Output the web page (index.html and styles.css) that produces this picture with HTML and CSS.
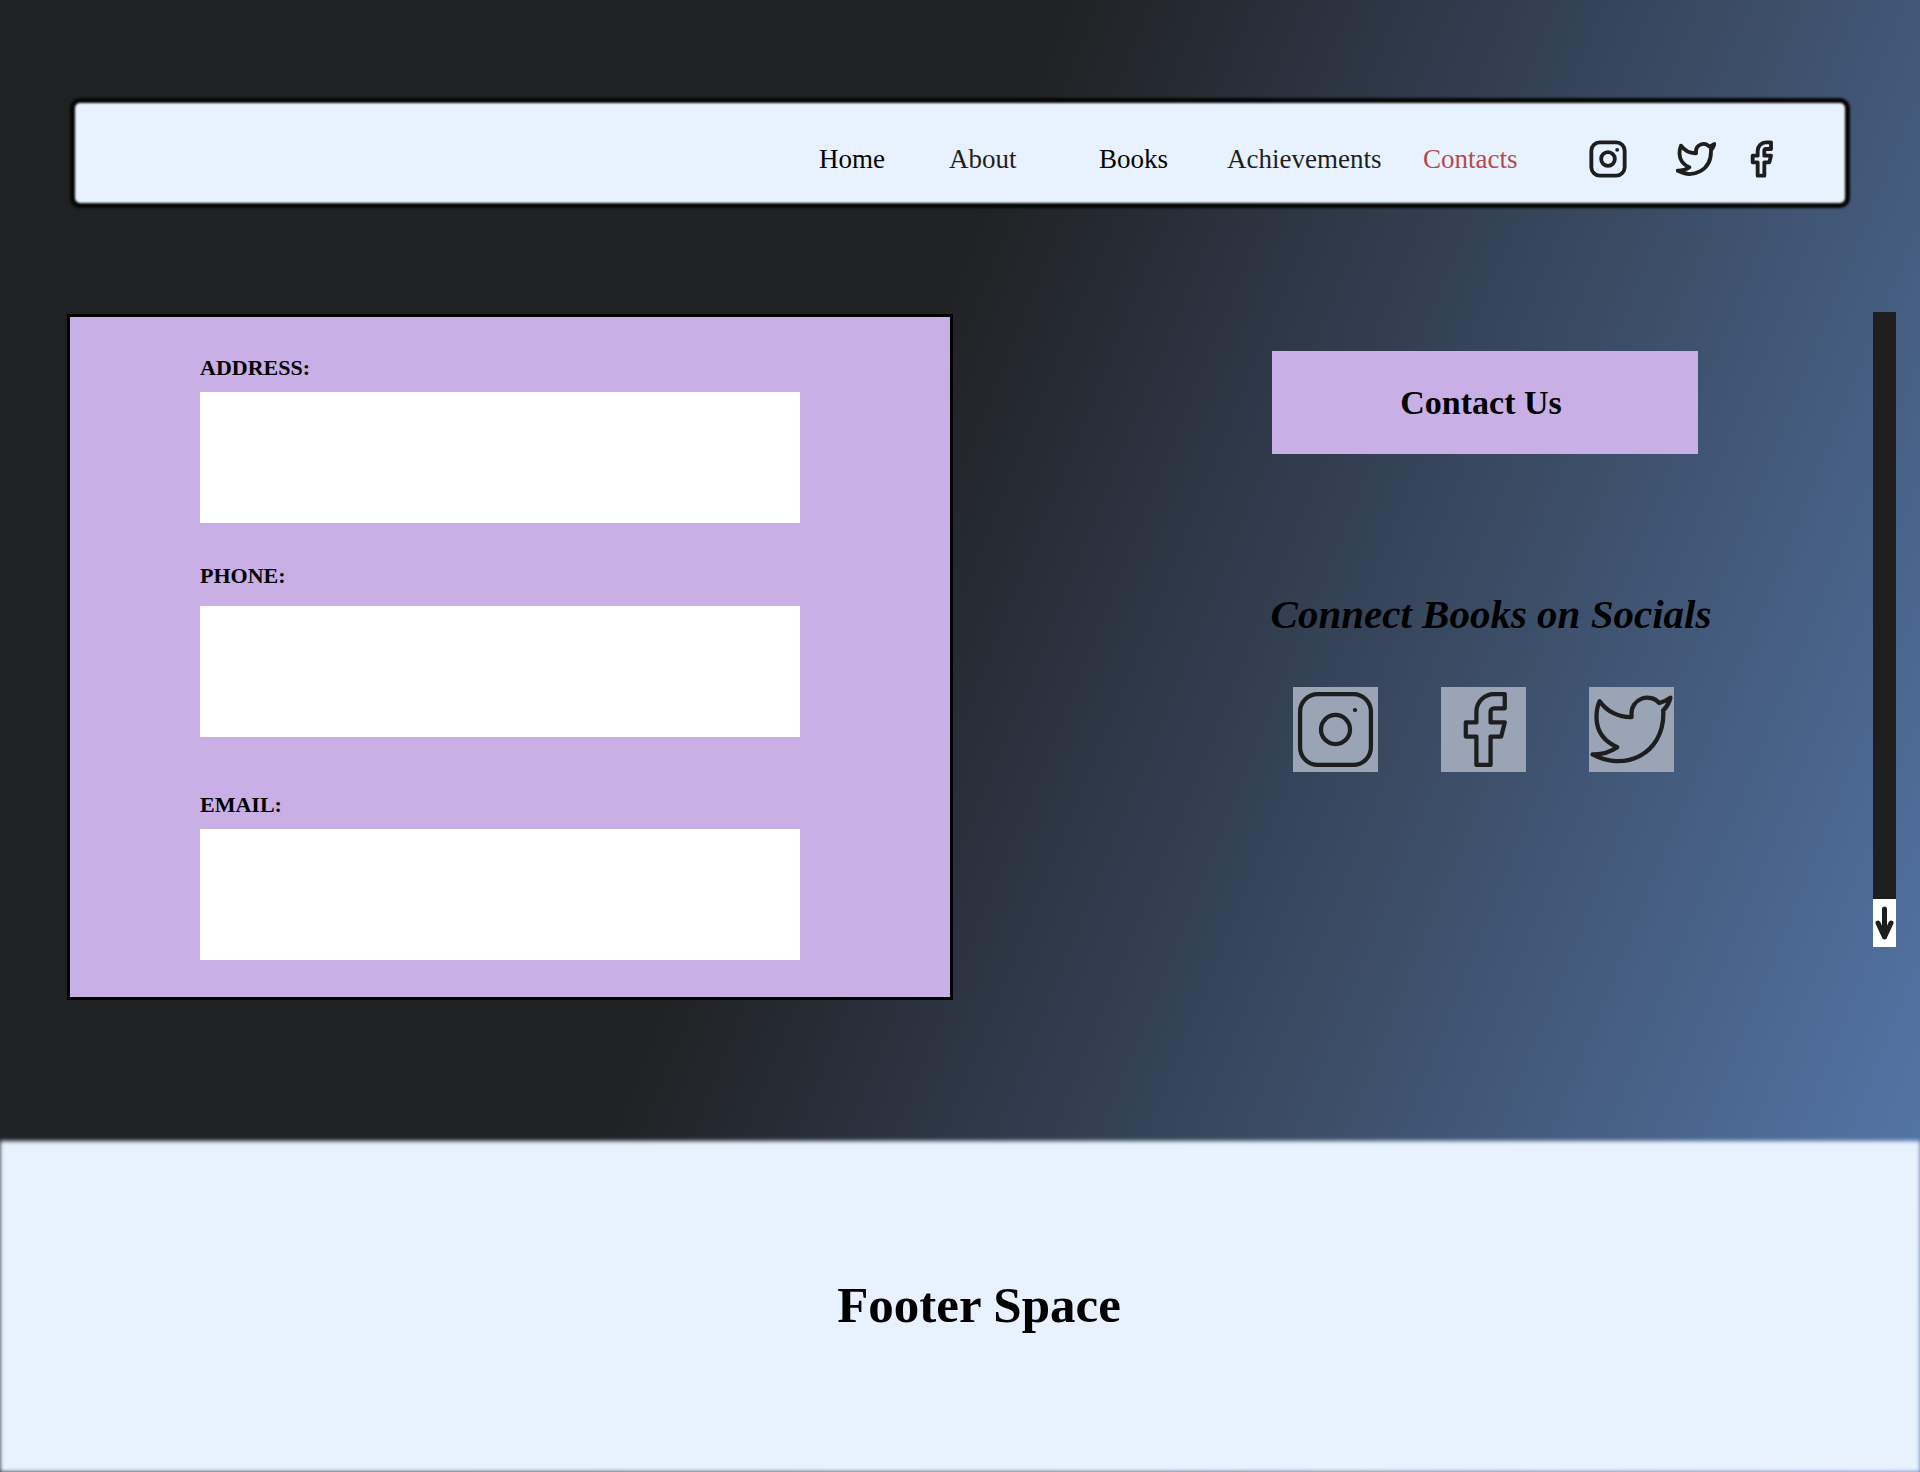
FILE: index.html
```html
<!DOCTYPE html>
<html lang="en">
<head>
<meta charset="utf-8">
<meta name="viewport" content="width=device-width, initial-scale=1">
<title>Contacts</title>
<link rel="stylesheet" href="styles.css">
</head>
<body>
<svg class="sprite" aria-hidden="true">
  <symbol id="instagram" viewBox="0 0 24 24">
    <rect x="2" y="2" width="20" height="20" rx="5"/>
    <circle cx="12" cy="12" r="4.1"/>
    <path d="M17.5 6.5h.01"/>
  </symbol>
  <symbol id="facebook" viewBox="0 0 24 24">
    <path d="M18 2h-3a5 5 0 0 0-5 5v3H7v4h3v8h4v-8h3l1-4h-4V7a1 1 0 0 1 1-1h3z"/>
  </symbol>
  <symbol id="twitter" viewBox="0 0 24 24">
    <path d="M23 3a10.9 10.9 0 0 1-3.14 1.53 4.48 4.48 0 0 0-7.86 3v1A10.66 10.66 0 0 1 3 4s-4 9 5 13a11.64 11.64 0 0 1-7 2c9 5 20 0 20-11.5a4.5 4.5 0 0 0-.08-.83A7.72 7.72 0 0 0 23 3z"/>
  </symbol>
</svg>

<header class="header">
  <nav class="nav" aria-label="Main">
    <a class="nav-link strong" href="#home">Home</a>
    <a class="nav-link" href="#about">About</a>
    <a class="nav-link strong" href="#books">Books</a>
    <a class="nav-link" href="#achievements">Achievements</a>
    <a class="nav-link current" href="#contacts" aria-current="page">Contacts</a>
    <a class="nav-icon" href="#instagram" aria-label="Instagram"><svg><use href="#instagram"/></svg></a>
    <a class="nav-icon" href="#twitter" aria-label="Twitter"><svg><use href="#twitter"/></svg></a>
    <a class="nav-icon" href="#facebook" aria-label="Facebook"><svg><use href="#facebook"/></svg></a>
  </nav>
</header>

<main class="main">
  <form class="form">
    <div class="field">
      <label for="address">ADDRESS:</label>
      <input id="address" type="text">
    </div>
    <div class="field phone">
      <label for="phone">PHONE:</label>
      <input id="phone" type="tel">
    </div>
    <div class="field email">
      <label for="email">EMAIL:</label>
      <input id="email" type="email">
    </div>
  </form>

  <section class="aside">
    <button class="contact" type="button">Contact Us</button>
    <h2 class="heading">Connect Books on Socials</h2>
    <div class="socials">
      <a class="tile" href="#instagram" aria-label="Instagram"><svg><use href="#instagram"/></svg></a>
      <a class="tile" href="#facebook" aria-label="Facebook"><svg><use href="#facebook"/></svg></a>
      <a class="tile" href="#twitter" aria-label="Twitter"><svg><use href="#twitter"/></svg></a>
    </div>
  </section>

  <div class="scroller">
    <button class="scroll-down" type="button" aria-label="Scroll down">
      <svg viewBox="0 0 23 48"><path d="M11.5 10v28M5 24l6.5 14L18 24"/></svg>
    </button>
  </div>
</main>

<footer class="footer">
  <p class="footer-text">Footer Space</p>
</footer>
</body>
</html>
```
FILE: styles.css
```css
* {
  box-sizing: border-box;
}

body {
  margin: 0;
  min-height: 100vh;
  display: flex;
  flex-direction: column;
  font-family: "Liberation Serif", serif;
  color: #000;
  background: linear-gradient(112deg, #202123 42%, #587db1 100%);
}

.sprite {
  display: none;
}

svg {
  display: block;
  fill: none;
  stroke: #1e1e1e;
  stroke-linecap: round;
  stroke-linejoin: round;
}

/* Header */
.header {
  padding: 98px 70px 0;
}

.nav {
  position: relative;
  display: grid;
  grid-template-columns: 130px 150px 128px 196px 165px 88px 65px 40px;
  justify-content: end;
  align-items: center;
  height: 110px;
  padding: 12px 69px 0 0;
}

/* Soft-edged panel behind the links */
.nav::before {
  content: "";
  position: absolute;
  inset: 0;
  border: 5px solid #050505;
  border-radius: 10px;
  background: #e8f2ff;
  filter: blur(1px);
}

.nav-link,
.nav-icon {
  position: relative;
  justify-self: start;
}

.nav-link {
  font-size: 27px;
  line-height: 32px;
  color: #1e1e1e;
  text-decoration: none;
}

.nav-link.strong {
  color: #000;
}

.nav-link.current {
  color: #b44a4c;
}

.nav-icon svg {
  width: 40px;
  height: 40px;
  stroke-width: 2.3;
}

/* Main area */
.main {
  display: grid;
  grid-template-columns: 886fr 920fr 23px;
  align-items: start;
  padding: 104px 24px 141px 67px;
}

.form {
  margin-top: 2px;
  padding: 39px 150px 37px 130px;
  border: 3px solid #000;
  background: #c8b0e6;
}

.field {
  display: flex;
  flex-direction: column;
  gap: 12px;
}

.field.phone {
  gap: 18px;
  margin-top: 41px;
}

.field.email {
  margin-top: 56px;
}

.field label {
  font-size: 22px;
  line-height: 24px;
  font-weight: bold;
}

.field input {
  width: 100%;
  height: 131px;
  padding: 0 16px;
  border: 0;
  border-radius: 0;
  background: #fff;
  font: inherit;
  font-size: 27px;
}

.aside {
  display: flex;
  flex-direction: column;
  align-items: center;
  padding: 39px 0 0 144px;
}

.contact {
  width: 426px;
  max-width: 100%;
  height: 103px;
  padding: 0 8px 0 0;
  border: 0;
  background: #c8b0e6;
  color: #000;
  font-family: inherit;
  font-size: 34px;
  font-weight: bold;
}

.heading {
  margin: 136px 0 0;
  padding-left: 12px;
  font-size: 41px;
  line-height: 48px;
  font-style: italic;
  font-weight: bold;
}

.socials {
  display: flex;
  gap: 63px;
  margin-top: 49px;
  padding-right: 4px;
}

.tile {
  background: #9ba4b5;
}

.tile svg {
  width: 85px;
  height: 85px;
  stroke-width: 1.2;
}

.scroller {
  display: flex;
  align-items: flex-end;
  height: 635px;
  background: #1e1e1e;
}

.scroll-down {
  width: 100%;
  height: 48px;
  padding: 0;
  border: 0;
  background: #fff;
}

.scroll-down svg {
  width: 100%;
  height: 48px;
  stroke-width: 5;
}

/* Footer */
.footer {
  position: relative;
  flex: 1;
  display: flex;
  align-items: center;
  justify-content: center;
  min-height: 331px;
  padding: 0 0 4px 38px;
}

.footer::before {
  content: "";
  position: absolute;
  inset: 0;
  background: #e8f2ff;
  filter: blur(2px);
}

.footer-text {
  position: relative;
  margin: 0;
  font-size: 51px;
  line-height: 60px;
  font-weight: bold;
}
```
